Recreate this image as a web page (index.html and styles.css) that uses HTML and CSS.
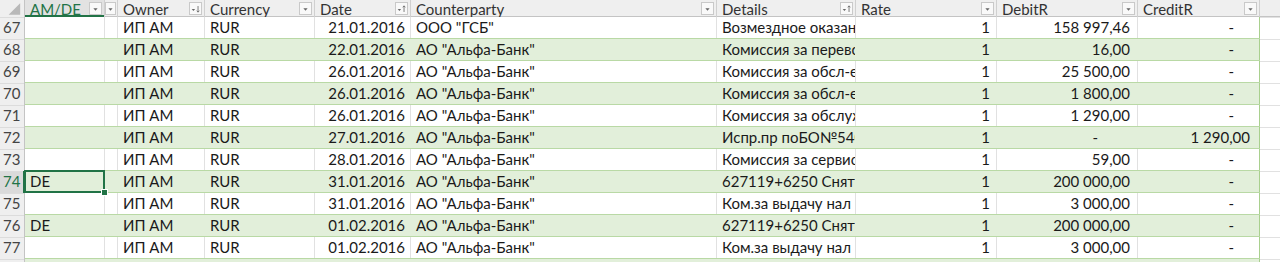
FILE: index.html
```html
<!DOCTYPE html>
<html>
<head>
<meta charset="utf-8">
<link rel="stylesheet" href="styles.css">
</head>
<body>
<div class="sheet">
  <div class="row head">
    <div class="corner"><svg width="25" height="17" viewBox="0 0 25 17"><polygon points="21,3 21,15 9,15" fill="#b9b9b9"/></svg></div>
    <div class="hc sel"><span>AM/DE</span><i class="dd"><svg width="13" height="12" viewBox="0 0 13 12"><polygon points="4,5 9,5 6.5,8" fill="#666"/></svg></i></div>
    <div class="hc narrow"><i class="dd"><svg width="11" height="12" viewBox="0 0 11 12"><polygon points="3,5 8,5 5.5,8" fill="#666"/></svg></i></div>
    <div class="hc"><span>Owner</span><i class="dd"><svg width="13" height="12" viewBox="0 0 13 12"><polygon points="2,6 6,6 4,8.5" fill="#666"/><path d="M9.5 2.5V9.5M8 8L9.5 9.8L11 8" stroke="#666" stroke-width="1" fill="none"/></svg></i></div>
    <div class="hc"><span>Currency</span><i class="dd"><svg width="13" height="12" viewBox="0 0 13 12"><polygon points="4,5 9,5 6.5,8" fill="#666"/></svg></i></div>
    <div class="hc"><span>Date</span><i class="dd"><svg width="13" height="12" viewBox="0 0 13 12"><polygon points="2,6 6,6 4,8.5" fill="#666"/><path d="M9.5 9.5V2.5M8 4L9.5 2.2L11 4" stroke="#666" stroke-width="1" fill="none"/></svg></i></div>
    <div class="hc"><span>Counterparty</span><i class="dd"><svg width="13" height="12" viewBox="0 0 13 12"><polygon points="4,5 9,5 6.5,8" fill="#666"/></svg></i></div>
    <div class="hc"><span>Details</span><i class="dd"><svg width="13" height="12" viewBox="0 0 13 12"><polygon points="2,6 6,6 4,8.5" fill="#666"/><path d="M9.5 9.5V2.5M8 4L9.5 2.2L11 4" stroke="#666" stroke-width="1" fill="none"/></svg></i></div>
    <div class="hc"><span>Rate</span><i class="dd"><svg width="13" height="12" viewBox="0 0 13 12"><polygon points="4,5 9,5 6.5,8" fill="#666"/></svg></i></div>
    <div class="hc"><span>DebitR</span><i class="dd"><svg width="13" height="12" viewBox="0 0 13 12"><polygon points="4,5 9,5 6.5,8" fill="#666"/></svg></i></div>
    <div class="hc"><span>CreditR</span><i class="dd"><svg width="13" height="12" viewBox="0 0 13 12"><polygon points="4,5 9,5 6.5,8" fill="#666"/></svg></i></div>
    <div class="hc blank"></div>
  </div>

  <div class="row odd">
    <div class="rh">67</div><div class="c"></div><div class="c"></div><div class="c">ИП АМ</div><div class="c">RUR</div><div class="c r">21.01.2016</div><div class="c">ООО "ГСБ"</div><div class="c clip">Возмездное оказание услуг</div><div class="c r num1">1</div><div class="c r debit">158 997,46</div><div class="c r credit dash">-</div><div class="c blank"></div>
  </div>
  <div class="row even">
    <div class="rh">68</div><div class="c"></div><div class="c"></div><div class="c">ИП АМ</div><div class="c">RUR</div><div class="c r">22.01.2016</div><div class="c">АО "Альфа-Банк"</div><div class="c clip">Комиссия за перевод</div><div class="c r num1">1</div><div class="c r debit">16,00</div><div class="c r credit dash">-</div><div class="c blank"></div>
  </div>
  <div class="row odd">
    <div class="rh">69</div><div class="c"></div><div class="c"></div><div class="c">ИП АМ</div><div class="c">RUR</div><div class="c r">26.01.2016</div><div class="c">АО "Альфа-Банк"</div><div class="c clip">Комиссия за обсл-е</div><div class="c r num1">1</div><div class="c r debit">25 500,00</div><div class="c r credit dash">-</div><div class="c blank"></div>
  </div>
  <div class="row even">
    <div class="rh">70</div><div class="c"></div><div class="c"></div><div class="c">ИП АМ</div><div class="c">RUR</div><div class="c r">26.01.2016</div><div class="c">АО "Альфа-Банк"</div><div class="c clip">Комиссия за обсл-е</div><div class="c r num1">1</div><div class="c r debit">1 800,00</div><div class="c r credit dash">-</div><div class="c blank"></div>
  </div>
  <div class="row odd">
    <div class="rh">71</div><div class="c"></div><div class="c"></div><div class="c">ИП АМ</div><div class="c">RUR</div><div class="c r">26.01.2016</div><div class="c">АО "Альфа-Банк"</div><div class="c clip">Комиссия за обслуж</div><div class="c r num1">1</div><div class="c r debit">1 290,00</div><div class="c r credit dash">-</div><div class="c blank"></div>
  </div>
  <div class="row even">
    <div class="rh">72</div><div class="c"></div><div class="c"></div><div class="c">ИП АМ</div><div class="c">RUR</div><div class="c r">27.01.2016</div><div class="c">АО "Альфа-Банк"</div><div class="c clip">Испр.пр поБО№540(</div><div class="c r num1">1</div><div class="c r debit dash">-</div><div class="c r credit">1 290,00</div><div class="c blank"></div>
  </div>
  <div class="row odd">
    <div class="rh">73</div><div class="c"></div><div class="c"></div><div class="c">ИП АМ</div><div class="c">RUR</div><div class="c r">28.01.2016</div><div class="c">АО "Альфа-Банк"</div><div class="c clip">Комиссия за сервис</div><div class="c r num1">1</div><div class="c r debit">59,00</div><div class="c r credit dash">-</div><div class="c blank"></div>
  </div>
  <div class="row even active">
    <div class="rh">74</div><div class="c selcell">DE</div><div class="c"></div><div class="c">ИП АМ</div><div class="c">RUR</div><div class="c r">31.01.2016</div><div class="c">АО "Альфа-Банк"</div><div class="c clip">627119+6250 Снятие</div><div class="c r num1">1</div><div class="c r debit">200 000,00</div><div class="c r credit dash">-</div><div class="c blank"></div>
  </div>
  <div class="row odd">
    <div class="rh">75</div><div class="c"></div><div class="c"></div><div class="c">ИП АМ</div><div class="c">RUR</div><div class="c r">31.01.2016</div><div class="c">АО "Альфа-Банк"</div><div class="c clip">Ком.за выдачу нал</div><div class="c r num1">1</div><div class="c r debit">3 000,00</div><div class="c r credit dash">-</div><div class="c blank"></div>
  </div>
  <div class="row even">
    <div class="rh">76</div><div class="c">DE</div><div class="c"></div><div class="c">ИП АМ</div><div class="c">RUR</div><div class="c r">01.02.2016</div><div class="c">АО "Альфа-Банк"</div><div class="c clip">627119+6250 Снятие</div><div class="c r num1">1</div><div class="c r debit">200 000,00</div><div class="c r credit dash">-</div><div class="c blank"></div>
  </div>
  <div class="row odd">
    <div class="rh">77</div><div class="c"></div><div class="c"></div><div class="c">ИП АМ</div><div class="c">RUR</div><div class="c r">01.02.2016</div><div class="c">АО "Альфа-Банк"</div><div class="c clip">Ком.за выдачу нал</div><div class="c r num1">1</div><div class="c r debit">3 000,00</div><div class="c r credit dash">-</div><div class="c blank"></div>
  </div>
  <div class="row even">
    <div class="rh">78</div><div class="c"></div><div class="c"></div><div class="c"></div><div class="c"></div><div class="c"></div><div class="c"></div><div class="c"></div><div class="c"></div><div class="c"></div><div class="c"></div><div class="c blank"></div>
  </div>
</div>
</body>
</html>
```

FILE: styles.css
```css
html, body {
  margin: 0;
  padding: 0;
  background: #ffffff;
}
body {
  font-family: Lato, "Liberation Sans", sans-serif;
  font-size: 15px;
  color: #1a1a1a;
  overflow: hidden;
  width: 1280px;
  height: 262px;
}
.sheet {
  width: 1280px;
}
.row {
  display: grid;
  grid-template-columns: 25px 80px 13px 87px 110px 96px 306px 139px 141px 141px 122px 20px;
  height: 22px;
  box-sizing: border-box;
  border-bottom: 1px solid #b9d9a5;
}
.row.head {
  height: 17px;
  background: #efefef;
  border-bottom: 1px solid #c4c4c4;
}
.corner {
  background: #efefef;
  border-right: 1px solid #c4c4c4;
  display: flex;
}
.hc {
  display: flex;
  align-items: center;
  justify-content: space-between;
  border-right: 1px solid #d0d0d0;
  padding-left: 5px;
  overflow: hidden;
  line-height: 16px;
  color: #333;
}
.hc span {
  white-space: nowrap;
}
.hc.sel {
  background: #e2e2e2;
  color: #217346;
  box-shadow: inset 0 -2px 0 #217346;
}
.hc.narrow {
  padding-left: 0;
}
.hc.blank {
  border-right: none;
}
.dd {
  display: flex;
  align-items: center;
  justify-content: center;
  width: 13px;
  height: 13px;
  margin-right: 2px;
  border: 1px solid #c9c9c9;
  background: #f9f9f9;
  box-sizing: border-box;
  flex: none;
}
.narrow .dd {
  width: 11px;
  margin-right: 1px;
}
.rh {
  background: #efefef;
  color: #444;
  text-align: left;
  padding-left: 3px;
  line-height: 21px;
  border-right: 1px solid #c4c4c4;
  box-shadow: inset 0 1px 0 #dcdcdc;
  margin-bottom: -1px;
}
.c {
  line-height: 21px;
  padding: 0 5px;
  white-space: nowrap;
  overflow: hidden;
}
.odd {
  background: #ffffff;
}
.odd .c {
  border-right: 1px solid #e1e1e1;
}
.even {
  background: #e2efda;
}
.even .c {
  border-right: 1px solid transparent;
}
.row .c:nth-child(11) {
  border-right: 1px solid #a9d08e;
}
.row .c.blank {
  background: #ffffff;
  border-right: none;
  box-shadow: inset 0 1px 0 #e1e1e1;
  margin-bottom: -1px;
}
.r {
  text-align: right;
}
.clip {
  text-overflow: clip;
}
.num1 {
  padding-right: 6px;
}
.debit {
  padding-right: 7px;
}
.debit.dash {
  padding-right: 39px;
}
.credit {
  padding-right: 9px;
}
.credit.dash {
  padding-right: 25px;
}
.active .rh {
  background: #dadada;
  color: #217346;
  border-right: 2px solid #217346;
}
.selcell {
  position: relative;
  overflow: visible;
}
.selcell::after {
  content: "";
  position: absolute;
  left: -1px;
  top: -1px;
  right: -1px;
  bottom: -1px;
  border: 2px solid #217346;
  pointer-events: none;
}
.selcell::before {
  content: "";
  position: absolute;
  right: -4px;
  bottom: -4px;
  width: 5px;
  height: 5px;
  background: #217346;
  border: 1px solid #ffffff;
  z-index: 2;
}
```
